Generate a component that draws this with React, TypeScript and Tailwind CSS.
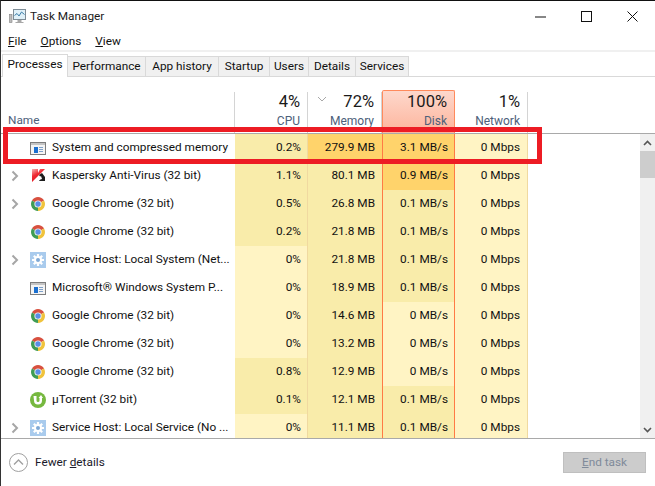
import React from "react";

const Y0 = "bg-[#fff4c4]";
const Y1 = "bg-[#f9ecaa]";
const Y3 = "bg-[#ffd36b]";

function Chevron() {
  return (
    <svg width="8" height="12" viewBox="0 0 8 12" className="block">
      <path d="M1.5 1.5 L6 6 L1.5 10.5" fill="none" stroke="#a6a6a6" strokeWidth="2" />
    </svg>
  );
}

function SysIcon() {
  return (
    <svg width="16" height="13" viewBox="0 0 16 13" className="block">
      <rect x="0.5" y="0.5" width="15" height="12" fill="#f4f4f4" stroke="#7d7d7d" />
      <rect x="1" y="1" width="14" height="2" fill="#c4c4c4" />
      <rect x="4" y="5" width="4" height="6" fill="#1a6fd0" />
      <path d="M9 5.5h4M9 7.5h4M9 9.5h4" stroke="#7fa0c8" strokeWidth="1" />
    </svg>
  );
}

function Kaspersky() {
  return (
    <svg width="16" height="16" viewBox="0 0 16 16" className="block">
      <defs>
        <linearGradient id="ksp" x1="0" y1="0" x2="0.6" y2="1">
          <stop offset="0" stopColor="#f6b4b4" />
          <stop offset="0.45" stopColor="#ee2a32" />
          <stop offset="1" stopColor="#e0101c" />
        </linearGradient>
      </defs>
      <path d="M2 1 L8 1 L8 5 L10 1 L15 1 L9 7 L2 14 Z" fill="url(#ksp)" />
      <path d="M9 7 L12 5 L15 9 L15 13 L9 13 L11 10 Z" fill="#1c1c1c" />
      <path d="M8 10 L11 8 L12 11 L9 12 Z" fill="#ffffff" />
    </svg>
  );
}

function Chrome() {
  return (
    <svg width="16" height="16" viewBox="0 0 16 16" className="block">
      <path d="M8 8 L1.94 4.5 A7 7 0 0 1 14.06 4.5 Z" fill="#d8503f" />
      <path d="M8 8 L14.06 4.5 A7 7 0 0 1 8 15 Z" fill="#f0c33c" />
      <path d="M8 8 L8 15 A7 7 0 0 1 1.94 4.5 Z" fill="#3f9c54" />
      <circle cx="8" cy="8" r="3.6" fill="#f4f4f4" />
      <circle cx="8" cy="8" r="2.7" fill="#5a8ee6" />
    </svg>
  );
}

function Gear() {
  return (
    <svg width="16" height="16" viewBox="0 0 16 16" className="block">
      <rect width="16" height="16" fill="#a9cbed" />
      <g stroke="#ffffff" strokeWidth="2.2">
        <path d="M8 2v12M2 8h12M3.8 3.8l8.4 8.4M12.2 3.8l-8.4 8.4" />
      </g>
      <circle cx="8" cy="8" r="4" fill="#ffffff" />
      <circle cx="8" cy="8" r="2" fill="#7fa9d6" />
    </svg>
  );
}

function Torrent() {
  return (
    <svg width="16" height="16" viewBox="0 0 16 16" className="block">
      <circle cx="8" cy="8" r="8" fill="#76b83f" />
      <path d="M3.5 4 H6.5 V8.5 A1.5 1.5 0 0 0 9.5 8.5 V6 H8.5 L11 3 L13 6 H12 V8.5 A4 4 0 0 1 4 8.5 Z" fill="#fff" />
    </svg>
  );
}

function TaskIcon() {
  return (
    <svg width="17" height="15" viewBox="0 0 17 15" className="block">
      <rect x="0.5" y="5.5" width="2.5" height="8" fill="#bcbcbc" stroke="#808080" strokeWidth="0.6" />
      <rect x="4.5" y="0.5" width="12" height="10" fill="#dff0f8" stroke="#7d8c96" />
      <path d="M5.5 6.5 L8 4.5 L10 7 L12.5 3 L15.5 5.5" fill="none" stroke="#3c7ea8" />
      <path d="M8.5 11h4v2h2v1H6.5v-1h2z" fill="#a8a8a8" />
    </svg>
  );
}

type Row = {
  name: string;
  icon: React.ReactNode;
  arrow?: boolean;
  cpu: string;
  mem: string;
  disk: string;
  net: string;
  c: string;
  m: string;
  d: string;
};

const rows: Row[] = [
  { name: "System and compressed memory", icon: <SysIcon />, cpu: "0.2%", mem: "279.9 MB", disk: "3.1 MB/s", net: "0 Mbps", c: Y1, m: Y3, d: Y3 },
  { name: "Kaspersky Anti-Virus (32 bit)", icon: <Kaspersky />, arrow: true, cpu: "1.1%", mem: "80.1 MB", disk: "0.9 MB/s", net: "0 Mbps", c: Y1, m: Y1, d: Y3 },
  { name: "Google Chrome (32 bit)", icon: <Chrome />, arrow: true, cpu: "0.5%", mem: "26.8 MB", disk: "0.1 MB/s", net: "0 Mbps", c: Y1, m: Y1, d: Y1 },
  { name: "Google Chrome (32 bit)", icon: <Chrome />, cpu: "0.2%", mem: "21.8 MB", disk: "0.1 MB/s", net: "0 Mbps", c: Y1, m: Y1, d: Y1 },
  { name: "Service Host: Local System (Net...", icon: <Gear />, arrow: true, cpu: "0%", mem: "21.8 MB", disk: "0.1 MB/s", net: "0 Mbps", c: Y0, m: Y1, d: Y1 },
  { name: "Microsoft® Windows System P...", icon: <SysIcon />, cpu: "0%", mem: "18.9 MB", disk: "0.1 MB/s", net: "0 Mbps", c: Y0, m: Y1, d: Y1 },
  { name: "Google Chrome (32 bit)", icon: <Chrome />, cpu: "0%", mem: "14.6 MB", disk: "0 MB/s", net: "0 Mbps", c: Y0, m: Y1, d: Y0 },
  { name: "Google Chrome (32 bit)", icon: <Chrome />, cpu: "0%", mem: "13.2 MB", disk: "0 MB/s", net: "0 Mbps", c: Y0, m: Y1, d: Y0 },
  { name: "Google Chrome (32 bit)", icon: <Chrome />, cpu: "0.8%", mem: "12.9 MB", disk: "0 MB/s", net: "0 Mbps", c: Y1, m: Y1, d: Y0 },
  { name: "µTorrent (32 bit)", icon: <Torrent />, cpu: "0.1%", mem: "12.1 MB", disk: "0.1 MB/s", net: "0 Mbps", c: Y1, m: Y1, d: Y1 },
  { name: "Service Host: Local Service (No ...", icon: <Gear />, arrow: true, cpu: "0%", mem: "11.1 MB", disk: "0.1 MB/s", net: "0 Mbps", c: Y0, m: Y1, d: Y1 },
];

const tabs = [
  { t: "Performance", w: "w-[78px]" },
  { t: "App history", w: "w-[73px]" },
  { t: "Startup", w: "w-[51px]" },
  { t: "Users", w: "w-[39px]" },
  { t: "Details", w: "w-[47px]" },
  { t: "Services", w: "w-[53px]" },
];

function Head({ pct, label, w, hot, caret }: { pct: string; label: string; w: string; hot?: boolean; caret?: boolean }) {
  return (
    <div
      className={`relative flex flex-col items-end pr-[7px] ${w} ${
        hot
          ? "border border-b-0 border-[#ff8a5c] rounded-t-[2px] bg-gradient-to-b from-[#fdd8cc] to-[#fdb49c] -mt-[2px] pt-[1px]"
          : "border-r border-[#d4d4d4]"
      }`}
    >
      {caret && (
        <svg width="10" height="6" viewBox="0 0 10 6" className="absolute left-[9px] top-[4px]">
          <path d="M1 1 L5 5 L9 1" fill="none" stroke="#a8a8a8" strokeWidth="1" />
        </svg>
      )}
      <span className="text-[16.5px] leading-[19px] text-[#1a1a1a]">{pct}</span>
      <span className="text-[12px] leading-[17px] mt-[2px] text-[#4c607a]">{label}</span>
    </div>
  );
}

export default function App() {
  return (
    <div className="relative w-[655px] h-[486px] overflow-hidden bg-white border-t border-l border-t-[#111] border-l-[#333] text-[11.8px] text-[#111] font-['Roboto','Open_Sans',sans-serif]">
      {/* title bar */}
      <div className="flex items-center h-[31px] pl-[8px]">
        <TaskIcon />
        <span className="ml-[4px] text-[#1a1a1a]">Task Manager</span>
        <div className="ml-auto flex items-center">
          <svg width="11" height="2" viewBox="0 0 11 2" className="mr-[35px]"><rect width="11" height="1" y="0.5" fill="#111" /></svg>
          <svg width="11" height="11" viewBox="0 0 11 11" className="mr-[35px]"><rect x="0.5" y="0.5" width="10" height="10" fill="none" stroke="#111" /></svg>
          <svg width="11" height="11" viewBox="0 0 11 11" className="mr-[17px]"><path d="M0.5 0.5 L10.5 10.5 M10.5 0.5 L0.5 10.5" stroke="#111" /></svg>
        </div>
      </div>
      {/* menu */}
      <div className="flex items-center gap-[14px] h-[19px] pl-[7px]">
        <span><u>F</u>ile</span>
        <span><u>O</u>ptions</span>
        <span><u>V</u>iew</span>
      </div>
      {/* tabs */}
      <div className="h-[2px] bg-[#f0f0f0] -mt-[1px]" />
      <div className="flex items-end h-[25px] pl-px border-b border-[#d9d9d9]">
        <div className="flex items-center justify-center w-[66px] h-[23px] pb-[2px] -mb-px bg-white border border-b-0 border-[#d9d9d9]">Processes</div>
        {tabs.map(({ t, w }) => (
          <div key={t} className={`flex items-center justify-center h-[20px] ${w} bg-[#f0f0f0] border-r border-t border-[#d9d9d9]`}>
            {t}
          </div>
        ))}
      </div>
      {/* column headers */}
      <div className="flex h-[57px] pt-[15px] items-stretch border-b border-[#a9a9a9]">
        <div className="w-[234px] border-r border-[#d4d4d4] flex items-end pl-[7px] pb-[3px] text-[#4c607a]">Name</div>
        <Head pct="4%" label="CPU" w="w-[73px]" />
        <Head pct="72%" label="Memory" w="w-[74px]" caret />
        <Head pct="100%" label="Disk" w="w-[73px]" hot />
        <Head pct="1%" label="Network" w="w-[73px]" />
      </div>
      {/* table */}
      <div className="flex h-[305px] border-b border-[#a9a9a9]">
        <div className="w-[639px] overflow-hidden">
          {rows.map((r, i) => (
            <div key={i} className="flex h-[28px] items-center">
              <div className="w-[234px] h-full flex items-center">
                <div className="w-[29px] pl-[10px] shrink-0">{r.arrow && <Chevron />}</div>
                <div className="w-[22px] shrink-0">{r.icon}</div>
                <span className="whitespace-nowrap">{r.name}</span>
              </div>
              <div className={`w-[73px] h-full flex items-center justify-end pr-[6px] border-r border-[#f0d9a0] ${r.c}`}>{r.cpu}</div>
              <div className={`w-[74px] h-full flex items-center justify-end pr-[7px] ${r.m}`}>{r.mem}</div>
              <div className={`w-[73px] h-full flex items-center justify-end pr-[6px] border-x border-[#ff7a45] ${r.d}`}>{r.disk}</div>
              <div className={`w-[73px] h-full flex items-center justify-end pr-[7px] border-r border-[#f0d9a0] ${Y0}`}>{r.net}</div>
            </div>
          ))}
        </div>
        {/* scrollbar */}
        <div className="w-[15px] h-full bg-[#f0f0f0] flex flex-col">
          <div className="h-[17px] flex items-center justify-center">
            <svg width="9" height="6" viewBox="0 0 9 6"><path d="M1 5 L4.5 1.5 L8 5" fill="none" stroke="#555" strokeWidth="1.6" /></svg>
          </div>
          <div className="h-[27px] bg-[#cdcdcd]" />
          <div className="mt-auto h-[17px] flex items-center justify-center">
            <svg width="9" height="6" viewBox="0 0 9 6"><path d="M1 1 L4.5 4.5 L8 1" fill="none" stroke="#555" strokeWidth="1.6" /></svg>
          </div>
        </div>
      </div>
      {/* footer */}
      <div className="flex items-center h-[47px] pl-[8px] pr-[9px]">
        <svg width="19" height="19" viewBox="0 0 19 19">
          <circle cx="9.5" cy="9.5" r="9" fill="none" stroke="#a0a0a0" />
          <path d="M5 11.5 L9.5 7 L14 11.5" fill="none" stroke="#a0a0a0" strokeWidth="1.4" />
        </svg>
        <span className="ml-[7px] text-[#1a1a2a]">Fewer <u>d</u>etails</span>
        <div className="ml-auto w-[83px] h-[21px] flex items-center justify-center bg-[#cccccc] border border-[#bfbfbf] text-[#7f8a9a]">
          <span><u>E</u>nd task</span>
        </div>
      </div>
      {/* annotation */}
      <div className="absolute left-[2px] top-[126px] w-[539px] h-[37px] border-[5px] border-[#ed1c24] pointer-events-none" />
    </div>
  );
}
